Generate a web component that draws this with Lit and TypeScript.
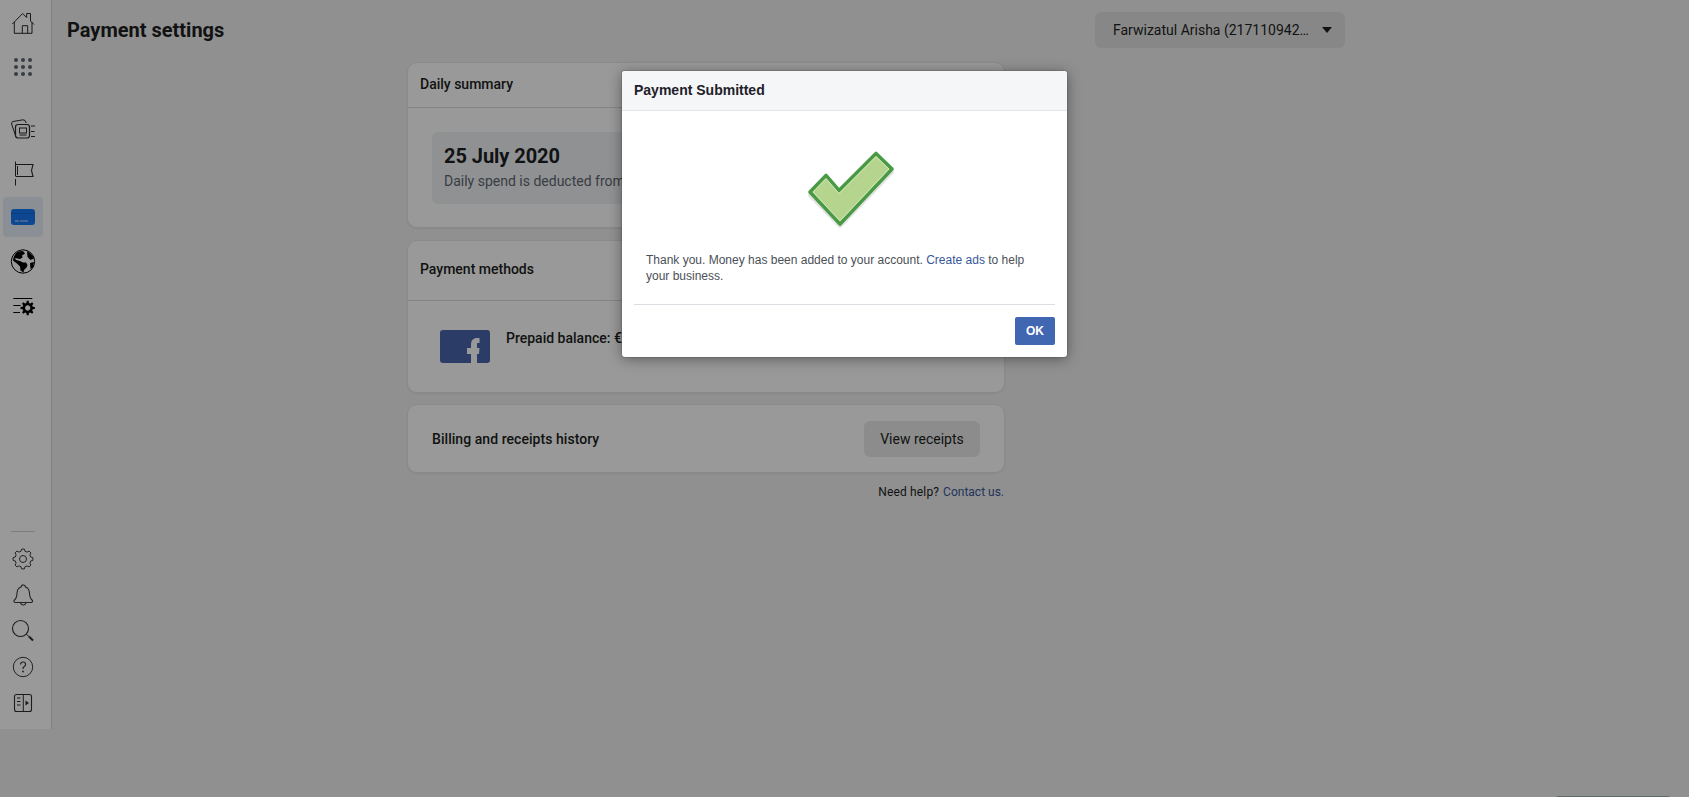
import { LitElement, html, css, svg } from "lit";
import { customElement } from "lit/decorators.js";

function gearPath(cx: number, cy: number, ro: number, ri: number, teeth: number): string {
  const pts: string[] = [];
  const step = (Math.PI * 2) / teeth;
  for (let i = 0; i < teeth; i++) {
    const a = i * step - Math.PI / 2;
    const corners: [number, number][] = [
      [ri, a - step * 0.32],
      [ro, a - step * 0.17],
      [ro, a + step * 0.17],
      [ri, a + step * 0.32],
    ];
    for (const [r, t] of corners) {
      pts.push(`${(cx + r * Math.cos(t)).toFixed(2)} ${(cy + r * Math.sin(t)).toFixed(2)}`);
    }
  }
  return "M" + pts.join("L") + "Z";
}

const icon = (content: unknown) =>
  html`<svg class="ico" viewBox="0 0 28 28" width="28" height="28" fill="none" stroke="#2a2b30" stroke-width="1">${content}</svg>`;

const ICONS = {
  home: icon(svg`<path d="M3.300 15L13.700 4.500L17.700 8.500V4.500H21.500V12L25 15.500" /><path d="M5.300 13V24.300H23V13" /><path d="M13.300 24.300V16.700H18.700V24.300" />`),
  dots: icon(svg`<g fill="#606770" stroke="none">${[7, 14, 21].map((y) => [7, 14, 21].map((x) => svg`<circle cx=${x} cy=${y} r="2" />`))}</g>`),
  pages: icon(svg`<path d="M7 22L2.600 9Q2.200 7 4 6.500L14 4.800Q16.500 4.500 17.200 8" /><rect x="6.500" y="9.500" width="14" height="13.500" rx="2.500" stroke-width="1.200" /><rect x="10.500" y="13" width="7" height="5" /><path d="M10.500 20H17.500" /><path d="M22 11H26M22 16.500H25.500M22 21.500H26" />`),
  flag: icon(svg`<path d="M6.500 2.500V17M6.500 20V26.500M8.500 7V16" /><path d="M6.500 5.500H24L22.500 11.500L24 17.500H6.500" stroke-width="1.100" />`),
  globe: icon(svg`<circle cx="14" cy="14.500" r="11.700" stroke="#000" /><g transform="translate(0 .5)"><path fill="#000" stroke="none" d="M9 4L14 3.500L16 6L13 8L13.500 10L11 11.500L6 10.500L7 12.500L11 13.500L14 15L17 15L18.500 17.500L17.500 20L15 22.500L14.500 25L11.500 23L11 19L8.500 16.500L4 13Q4.500 7 9 4ZM18 3.500Q23 6 25 11L21.500 12.500L18.500 9.500Z" /><path fill="#000" stroke="none" d="M21 15.500L25 14.500L24 20L21.500 21.500Z" /></g>`),
  config: icon(svg`<path d="M4.300 7.500H23.300M4.300 14.500H11.700M4.300 21.500H11" stroke="#000" /><path fill="#000" stroke="none" fill-rule="evenodd" d="${gearPath(18.7, 17, 7.2, 5.2, 8)} M18.700 14.300a2.700 2.700 0 1 0 .01 0Z" />`),
  gear: icon(svg`<path d="${gearPath(14, 14, 10, 8, 8)}" stroke-linejoin="round" stroke="#3a3b40" /><circle cx="14" cy="14" r="3.500" stroke="#3a3b40" />`),
  bell: icon(svg`<path stroke="#3a3b40" stroke-width="1.100" d="M6 21.500Q4.500 21 5 19.500Q8 17 8 12Q8.500 7 12 6Q13 3.500 14.500 4Q16 4 16.500 6Q20 7 20.500 12Q20.500 17 23.500 19.500Q24 21 22.500 21.500ZM11.500 21.500Q12 24 14.300 24Q16.500 24 17 21.500" />`),
  search: icon(svg`<circle cx="11.500" cy="11.500" r="8" stroke="#2f3035" stroke-width="1.100" /><path stroke="#2f3035" stroke-width="1" d="M17.300 17.200L20 19.500" /><path stroke="#2f3035" stroke-width="2" d="M20 19.500L24 23.500" />`),
  help: icon(svg`<circle cx="14" cy="14" r="9.700" stroke="#3a3b40" /><path stroke="#3a3b40" stroke-width="1.200" d="M11.500 11.500Q11.700 9 14 9Q16.600 9 16.600 11.300Q16.600 12.800 15 13.700Q14 14.300 14 16" /><circle cx="14" cy="18.500" r=".9" fill="#3a3b40" stroke="none" />`),
  panel: icon(svg`<rect x="5.500" y="5.500" width="17" height="17" rx="2" stroke="#2f3035" stroke-width="1.100" /><path stroke="#2f3035" d="M14.300 5.500V22.500M8 9H11.500M8 12.500H11.500M8 16H11.500" /><path fill="#2f3035" stroke="none" d="M16.500 11.500L20 14L16.500 16.500Z" />`),
};

@customElement("app-root")
export class AppRoot extends LitElement {
  static styles = css`
    :host {
      display: block;
      width: 1689px;
      height: 797px;
      overflow: hidden;
      background: #f0f0f0;
      font-family: Roboto, "Liberation Sans", sans-serif;
      color: #1c1e21;
      position: relative;
    }
    * { box-sizing: border-box; }
    .page { display: flex; align-items: flex-start; }
    .sidebar {
      width: 52px;
      height: 729px;
      flex: none;
      background: #fff;
      border-right: 1px solid #d3d5d8;
      display: flex;
      flex-direction: column;
      padding-top: 1px;
    }
    .top { display: flex; flex-direction: column; }
    .spacer-a { height: 18px; flex: none; }
    .spacer-b { flex: 1; }
    .item { width: 46px; height: 44px; display: flex; align-items: center; justify-content: center; }
    .item.active .hl {
      width: 40px; height: 40px; border-radius: 4px; background: #e7eefb;
      display: flex; align-items: center; justify-content: center;
    }
    .ico { display: block; }
    .divider { width: 24px; height: 1px; background: #ccd0d5; margin: 0 0 9px 11px; }
    .bottom { display: flex; flex-direction: column; padding-bottom: 8px; }
    .bottom .item { height: 36px; }
    .card-icon { width: 24px; height: 16px; display: block; }

    .main { flex: 1; padding: 12px 344px 0 15px; min-width: 0; }
    .head { display: flex; justify-content: space-between; align-items: center; height: 36px; }
    h1 { margin: 0; font-size: 20px; font-weight: 700; line-height: 36px; }
    .account {
      width: 250px; height: 36px; border-radius: 6px; background: #e2e2e2;
      display: flex; align-items: center; padding: 0 13px 0 18px; font-size: 14px; color: #1c1e21; justify-content: space-between;
    }
    .account span { white-space: nowrap; overflow: hidden; text-overflow: ellipsis; width: 197px; }
    .caret { width: 0; height: 0; border-left: 5px solid transparent; border-right: 5px solid transparent; border-top: 6px solid #1c1e21; }

    .col { margin: 14px 0 0 340px; width: 598px; display: flex; flex-direction: column; gap: 12px; }
    .card { background: #fff; border: 1px solid #e6e6e6; border-radius: 10px; box-shadow: 0 1px 2px rgba(0,0,0,.06); }
    .card-title { font-size: 14px; font-weight: 500; padding: 0 12px 3px; display: flex; align-items: center; border-bottom: 1px solid #dadde1; }
    .c1 { height: 166px; }
    .c1 .card-title { height: 45px; }
    .summary { margin: 24px 24px 0; height: 72px; background: #f0f2f5; border-radius: 6px; padding: 12px; }
    .date { font-size: 20px; font-weight: 700; line-height: 24px; letter-spacing: -0.05px; }
    .sub { font-size: 14px; color: #606770; line-height: 20px; margin-top: 3px; white-space: nowrap; }
    .c2 { height: 153px; }
    .c2 .card-title { height: 60px; }
    .method { display: flex; margin: 29px 0 0 32px; gap: 16px; }
    .fb { width: 50px; height: 33px; border-radius: 3px; background: #4967aa; overflow: hidden; flex: none; }
    .fb svg { display: block; }
    .bal { font-size: 14px; font-weight: 500; line-height: 16px; white-space: nowrap; }
    .c3 { height: 69px; margin-top: -1px; display: flex; align-items: center; justify-content: space-between; padding: 0 24px; font-size: 14px; font-weight: 500; letter-spacing: .05px; }
    .btn { width: 116px; height: 36px; border-radius: 6px; background: #e9e9e9; font-size: 14px; font-weight: 400; letter-spacing: 0; display: flex; align-items: center; justify-content: center; }
    .help { width: 597px; margin: 11px 0 0 340px; font-size: 12px; text-align: right; line-height: 16px; }
    .help span { letter-spacing: .15px; margin-right: 1px; }
    .help a { color: #385898; }

    .overlay { position: absolute; inset: 0; background: rgba(0,0,0,.4); }
    .bar { position: absolute; left: 1557px; bottom: 0; width: 112px; height: 1px; background: #5f6a6d; }
    .modal {
      position: absolute; left: 622px; top: 71px; width: 445px; height: 286px;
      background: #fff; border-radius: 3px; box-shadow: 0 2px 14px rgba(0,0,0,.4), 0 0 0 1px rgba(0,0,0,.1);
      font-family: "Liberation Sans", Arial, sans-serif; display: flex; flex-direction: column;
    }
    .m-head {
      height: 40px; background: #f5f6f7; border-bottom: 1px solid #e5e5e5; border-radius: 3px 3px 0 0;
      padding: 0 12px 2px; display: flex; align-items: center; font-size: 14px; font-weight: 700; color: #1d2129; flex: none;
    }
    .m-body { padding: 0 12px; flex: 1; display: flex; flex-direction: column; }
    .check { display: block; margin: 36px 0 0 173px; flex: none; }
    .msg { font-size: 12px; line-height: 16px; color: #4b4f56; margin: 21px 12px 0; }
    .msg a { color: #365899; }
    .m-rule { height: 1px; background: #dadde1; margin-top: 20px; }
    .m-foot { display: flex; justify-content: flex-end; padding-top: 12px; }
    .ok {
      width: 40px; height: 28px; background: #4267b2; border-radius: 2px;
      color: #fff; font-size: 12px; font-weight: 700; display: flex; align-items: center; justify-content: center;
    }
  `;

  render() {
    return html`
      <div class="page">
        <nav class="sidebar">
          <div class="top">
            <div class="item">${ICONS.home}</div>
            <div class="item">${ICONS.dots}</div>
            <div class="spacer-a"></div>
            <div class="item">${ICONS.pages}</div>
            <div class="item">${ICONS.flag}</div>
            <div class="item active"><div class="hl">
              <svg class="card-icon" viewBox="0 0 24 16"><rect width="24" height="16" rx="3" fill="#1877f2"/><rect y="4" width="24" height="1" fill="#1467d0"/><path d="M4 12H8M9 12H17" stroke="#cfe0f7" stroke-width="1"/></svg>
            </div></div>
            <div class="item">${ICONS.globe}</div>
            <div class="item">${ICONS.config}</div>
          </div>
          <div class="spacer-b"></div>
          <div class="divider"></div>
          <div class="bottom">
            <div class="item">${ICONS.gear}</div>
            <div class="item">${ICONS.bell}</div>
            <div class="item">${ICONS.search}</div>
            <div class="item">${ICONS.help}</div>
            <div class="item">${ICONS.panel}</div>
          </div>
        </nav>
        <main class="main">
          <div class="head">
            <h1>Payment settings</h1>
            <div class="account"><span>Farwizatul Arisha (217110942853)</span><div class="caret"></div></div>
          </div>
          <div class="col">
            <section class="card c1">
              <div class="card-title">Daily summary</div>
              <div class="summary">
                <div class="date">25 July 2020</div>
                <div class="sub">Daily spend is deducted from your prepaid balance</div>
              </div>
            </section>
            <section class="card c2">
              <div class="card-title">Payment methods</div>
              <div class="method">
                <div class="fb">
                  <svg viewBox="0 0 50 33" width="50" height="33"><path fill="#fff" d="M31 33V24H27V18H31V15C31 10 33.500 8 37 8H39.500V13H37.500C37 13 37 13.500 37 14.500V18H39.500L39 24H37V33Z"/></svg>
                </div>
                <div class="bal">Prepaid balance: €0.00</div>
              </div>
            </section>
            <section class="card c3">
              <div>Billing and receipts history</div>
              <div class="btn">View receipts</div>
            </section>
          </div>
          <div class="help"><span>Need help?</span> <a>Contact us.</a></div>
        </main>
      </div>
      <div class="overlay"></div>
      <div class="bar"></div>
      <div class="modal">
        <div class="m-head">Payment Submitted</div>
        <div class="m-body">
          <svg class="check" width="88" height="84" viewBox="0 0 88 84">
            <path d="M3 48L19 32L32 46L69 10L85 25L33 79Z" fill="#000" opacity=".1" stroke="#000" stroke-linejoin="round" stroke-width="4"/>
            <path d="M3 45L19 28.500L32 43.500L69 6.500L85 22L33 77Z" fill="#b5d58e" stroke="#499a44" stroke-width="3.600" stroke-linejoin="round"/>
            <path d="M6 45L19 31.500L32 46.500L69 9.500L82 22L33 74Z" fill="none" stroke="#d8e8c0" stroke-width="1"/>
          </svg>
          <div class="msg">Thank you. Money has been added to your account. <a>Create ads</a> to help your business.</div>
          <div class="m-rule"></div>
          <div class="m-foot"><div class="ok">OK</div></div>
        </div>
      </div>
    `;
  }
}
